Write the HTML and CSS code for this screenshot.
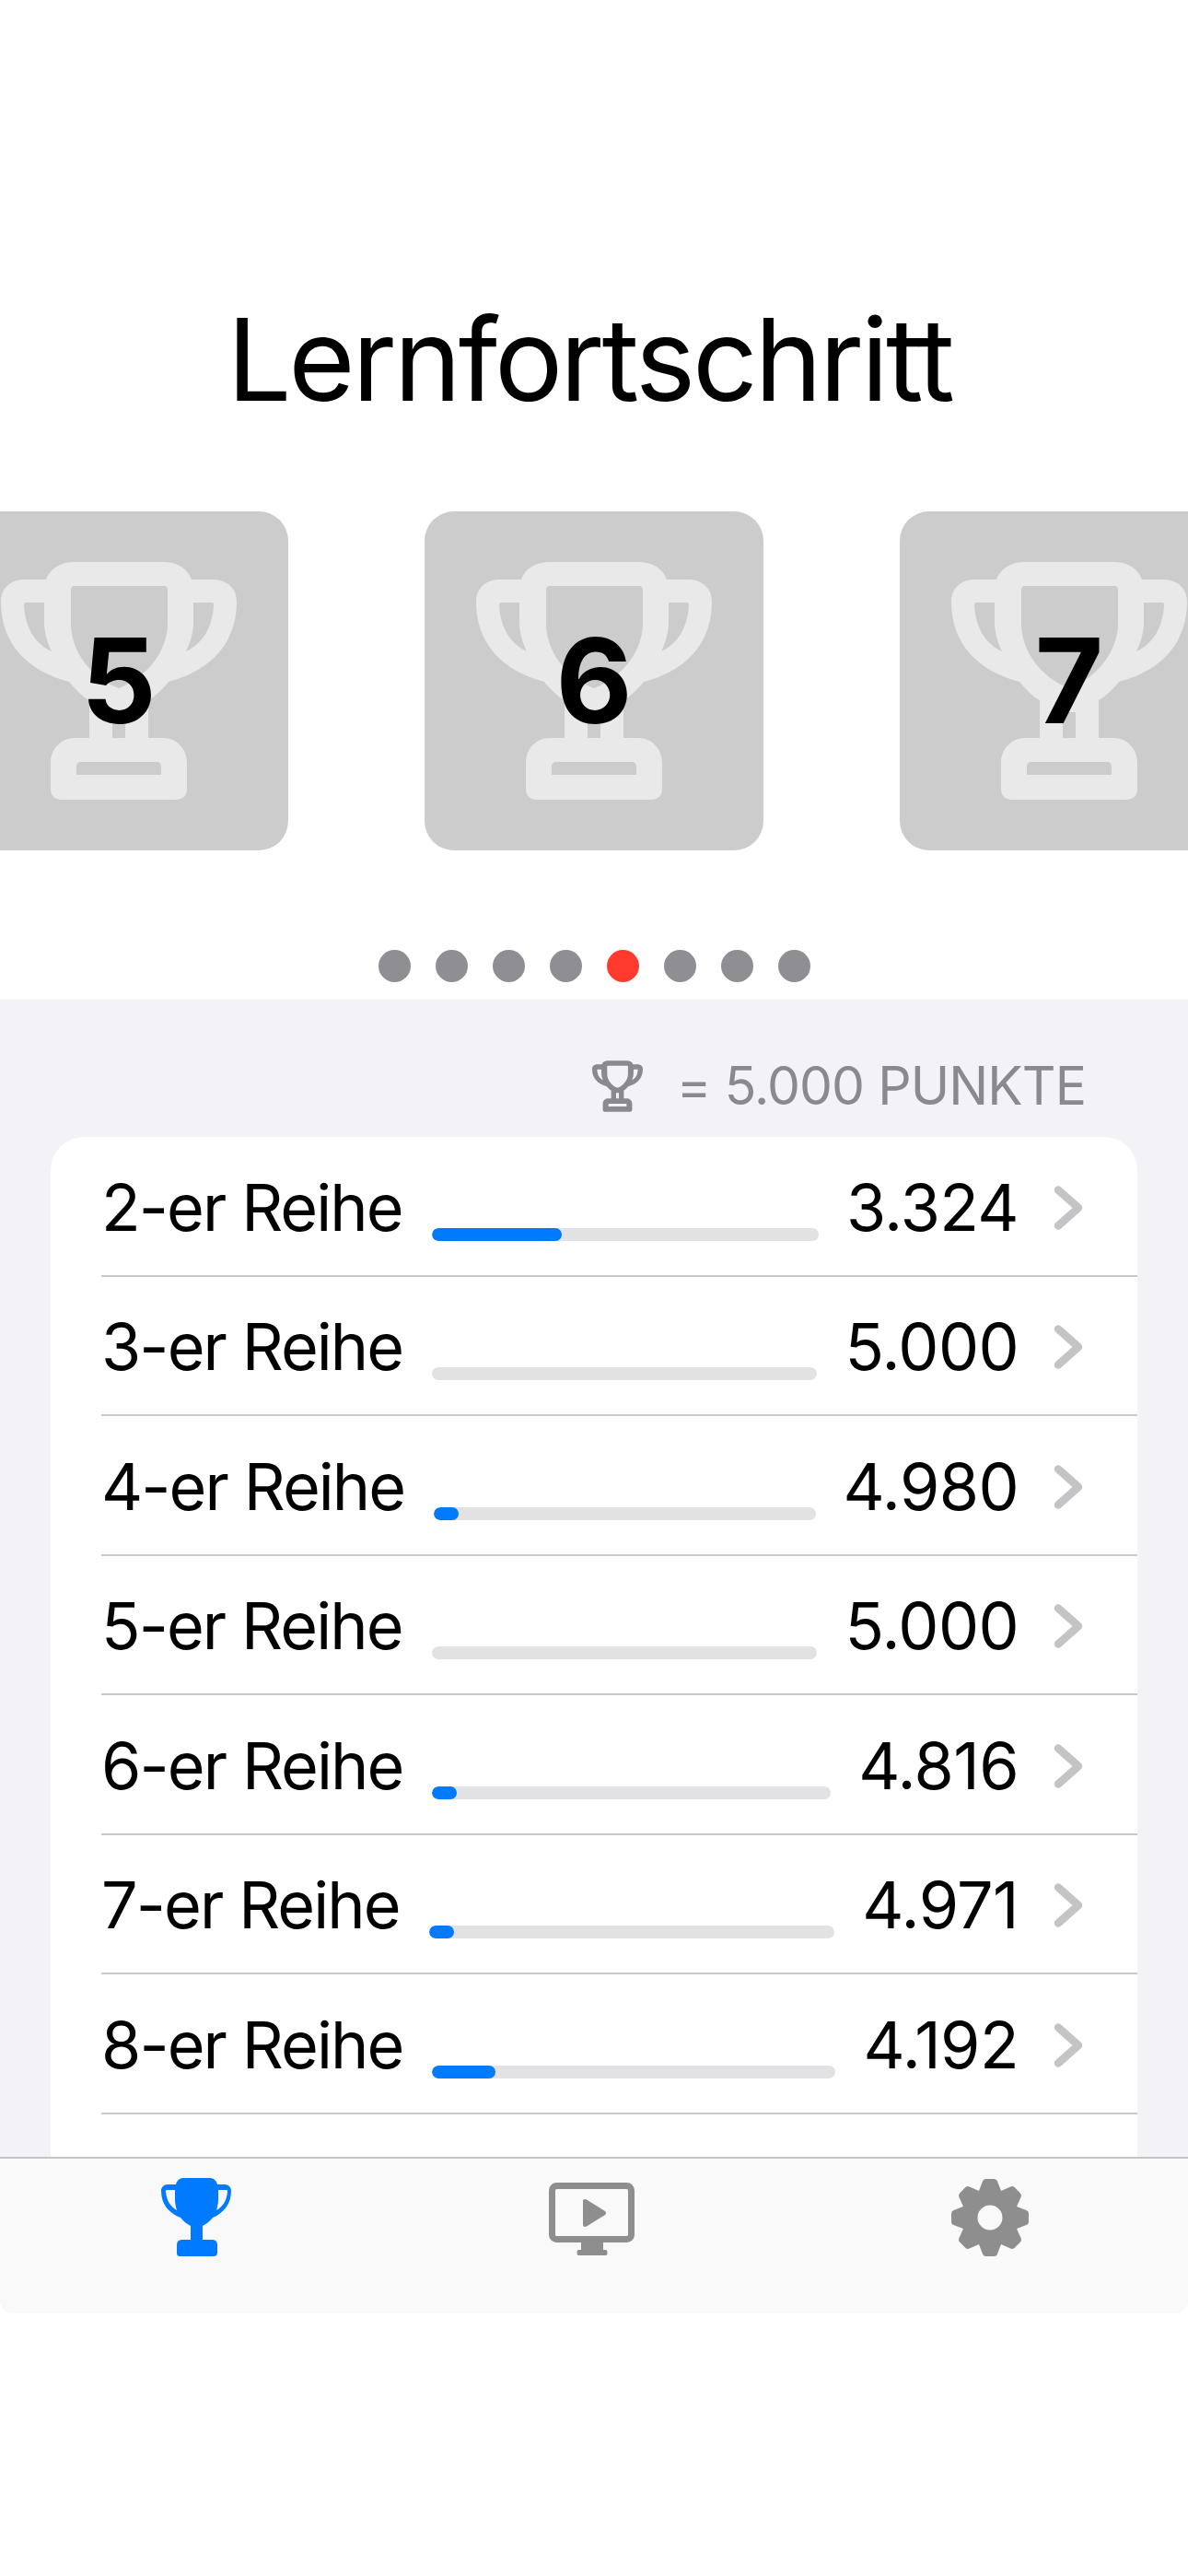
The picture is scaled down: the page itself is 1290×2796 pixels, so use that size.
FILE: index.html
```html
<!DOCTYPE html>
<html lang="de">
<head>
<meta charset="utf-8">
<title>Lernfortschritt</title>
<link rel="stylesheet" href="styles.css">
</head>
<body>
<svg class="defs" width="0" height="0" aria-hidden="true">
  <defs>
    <symbol id="trophy" viewBox="0 0 256 258">
      <path fill-rule="evenodd" d="M49 19C53 7 65 0 80 0H176C191 0 203 7 207 19H230C246 19 256 29 256 43C256 88 228 118 182 130C178 135 168 146 160 150V191H176C191 191 202 203 202 218V246C202 254 197 258 190 258H66C59 258 54 254 54 246V218C54 203 65 191 80 191H96V150C88 146 78 135 74 130C28 118 0 88 0 43C0 29 10 19 26 19Z
      M80 26H177C180 26 181 28 181 31V67C181 95 160 125 128 137C96 125 76 95 76 67V31C76 28 77 26 80 26Z
      M209 44H229C230 44 231 45 231 46C230 70 220 88 201 97C206 87 209 76 209 65Z
      M47 44H27C26 44 25 45 25 46C26 70 36 88 55 97C50 87 47 76 47 65Z
      M121 163H135V191H121Z
      M82 231V222C82 219 84 217 87 217H169C172 217 174 219 174 222V231Z"/>
    </symbol>
    <symbol id="chev" viewBox="0 0 34 50">
      <path d="M6 5.500L28 25L6 44.500"/>
    </symbol>
  </defs>
</svg>
<main class="screen">
  <h1 class="title">Lernfortschritt</h1>
  <div class="carousel">
    <div class="card"><svg class="card-trophy"><use href="#trophy"/></svg><span class="digit">5</span></div>
    <div class="card"><svg class="card-trophy"><use href="#trophy"/></svg><span class="digit">6</span></div>
    <div class="card"><svg class="card-trophy"><use href="#trophy"/></svg><span class="digit">7</span></div>
  </div>
  <div class="dots">
    <span class="dot"></span><span class="dot"></span><span class="dot"></span><span class="dot"></span>
    <span class="dot dot-active"></span><span class="dot"></span><span class="dot"></span><span class="dot"></span>
  </div>
  <section class="panel">
    <div class="legend">
      <svg class="legend-trophy"><use href="#trophy"/></svg>
      <span class="legend-text">= 5.000 PUNKTE</span>
    </div>
    <div class="list">
      <div class="row"><span class="label">2-er Reihe</span><div class="track"><div class="fill" style="width:33.6%"></div></div><span class="value">3.324</span><svg class="chevron"><use href="#chev"/></svg></div>
      <div class="row"><span class="label">3-er Reihe</span><div class="track"></div><span class="value">5.000</span><svg class="chevron"><use href="#chev"/></svg></div>
      <div class="row"><span class="label">4-er Reihe</span><div class="track"><div class="fill" style="width:6.5%"></div></div><span class="value">4.980</span><svg class="chevron"><use href="#chev"/></svg></div>
      <div class="row"><span class="label">5-er Reihe</span><div class="track"></div><span class="value">5.000</span><svg class="chevron"><use href="#chev"/></svg></div>
      <div class="row"><span class="label">6-er Reihe</span><div class="track"><div class="fill" style="width:6.2%"></div></div><span class="value">4.816</span><svg class="chevron"><use href="#chev"/></svg></div>
      <div class="row"><span class="label">7-er Reihe</span><div class="track"><div class="fill" style="width:6.1%"></div></div><span class="value">4.971</span><svg class="chevron"><use href="#chev"/></svg></div>
      <div class="row"><span class="label">8-er Reihe</span><div class="track"><div class="fill" style="width:15.7%"></div></div><span class="value">4.192</span><svg class="chevron"><use href="#chev"/></svg></div>
    </div>
  </section>
  <nav class="tabbar">
    <svg class="tab-icon tab-trophy" viewBox="0 0 76 85"><path fill-rule="evenodd" d="M16 7C17 3 20 0 24 0H53C57 0 60 3 61 7H69C73 7 76 10 76 14C76 28 68 38 56 43C53 47 49 50 45 52V67H55C59 67 61 69 61 73V81C61 84 59 85 57 85H21C18 85 17 84 17 81V73C17 69 19 67 23 67H32V52C28 50 24 47 21 43C8 38 0 28 0 14C0 10 3 7 7 7ZM15 13H6C5 13 5 14 5 15C6 25 10 31 17 35C16 31 15 28 15 24ZM62 13H71C72 13 72 14 72 15C71 25 67 31 60 35C61 31 62 28 62 24Z"/></svg>
    <svg class="tab-icon tab-monitor" viewBox="0 0 93 79"><rect class="screen-frame" x="3.5" y="3.5" width="86" height="58" rx="5"/><path d="M37 20.500C37 18 39 17.500 41 18.500L61 31C62.500 32 62.500 34 61 35L41 47.500C39 48.500 37 48 37 45.500ZM35 64H59V73H62C64 73 64 79 62 79H32C30 79 30 73 32 73H35Z"/></svg>
    <svg class="tab-icon tab-gear" viewBox="0 0 84 84"><g class="gear" transform="translate(42 42)"><circle class="gear-ring" r="22.500"/><path id="tooth" d="M-12 -29L-8 -39.500Q-7 -42 -4.500 -42H4.500Q7 -42 8 -39.500L12 -29Z"/><use href="#tooth" transform="rotate(45)"/><use href="#tooth" transform="rotate(90)"/><use href="#tooth" transform="rotate(135)"/><use href="#tooth" transform="rotate(180)"/><use href="#tooth" transform="rotate(225)"/><use href="#tooth" transform="rotate(270)"/><use href="#tooth" transform="rotate(315)"/></g></svg>
  </nav>
</main>
</body>
</html>
```
FILE: styles.css
```css
* { box-sizing: border-box; }
html, body { margin: 0; padding: 0; background: #fff; }
body { font-family: Inter, "Liberation Sans", sans-serif; color: #000; }
.defs { position: absolute; }
.screen { width: 1290px; height: 2796px; overflow: hidden; display: flex; flex-direction: column; }
.title { margin: 0; padding: 315px 10px 0 0; height: 555px; text-align: center; font-size: 124px; font-weight: 400; line-height: 150px; letter-spacing: -3.200px; }
.carousel { display: flex; justify-content: center; gap: 148px; height: 368px; flex-shrink: 0; }
.card { position: relative; flex: 0 0 368px; height: 368px; background: #cccccc; border-radius: 32px; display: flex; align-items: center; justify-content: center; }
.card-trophy { width: 256px; height: 258px; fill: #e9e9e9; }
.digit { position: absolute; inset: 0; display: flex; align-items: center; justify-content: center; font-size: 128px; font-weight: 700; line-height: 1; }
.dots { display: flex; justify-content: center; gap: 27px; height: 162px; padding-top: 108px; flex-shrink: 0; }
.dot { width: 35px; height: 35px; border-radius: 50%; background: #8e8e93; }
.dot-active { background: #ff3b30; }
.panel { flex: 0 0 1256px; background: #f2f2f7; overflow: hidden; display: flex; flex-direction: column; }
.legend { display: flex; align-items: center; justify-content: flex-end; height: 149px; padding: 38px 111px 0 0; gap: 37px; color: #8a8a8e; flex-shrink: 0; }
.legend-trophy { width: 55px; height: 62px; fill: #8a8a8e; }
.legend-text { font-size: 57px; line-height: 62px; letter-spacing: -0.900px; }
.list { margin: 0 55px; flex: 1; background: #fff; border-radius: 36px 36px 0 0; padding-left: 55px; }
.row { display: flex; align-items: center; height: 151.500px; border-bottom: 2px solid #c9c9cc; padding-right: 58px; font-size: 70px; }
.label { padding-top: 3px; letter-spacing: -1.900px; white-space: nowrap; }
.value { padding-top: 3px; letter-spacing: -0.600px; }
.track { flex: 1; height: 14px; margin: 62px 30px 0 32px; background: #e2e2e4; border-radius: 7px; overflow: hidden; }
.fill { height: 100%; background: #007aff; border-radius: 7px; }
.chevron { width: 34px; height: 50px; margin: 4px 0 0 37px; fill: none; stroke: #c4c4c6; stroke-width: 8.500; stroke-linecap: round; stroke-linejoin: round; flex-shrink: 0; }
.tabbar { flex: 0 0 170px; border-top: 2px solid #c6c6c8; background: #f9f9f9; border-radius: 0 0 14px 14px; display: flex; justify-content: space-between; align-items: flex-start; }
.tab-icon { flex-shrink: 0; display: block; }
.tab-trophy { width: 76px; height: 85px; margin: 21px 0 0 175px; fill: #007aff; }
.tab-monitor { width: 93px; height: 79px; margin: 26px 0 0 0; fill: #8e8e8e; }
.tab-gear { width: 84px; height: 84px; margin: 22px 173px 0 0; }
.screen-frame { fill: none; stroke: #8e8e8e; stroke-width: 7; }
.gear { fill: #8e8e8e; }
.gear-ring { fill: none; stroke: #8e8e8e; stroke-width: 18; }
```
